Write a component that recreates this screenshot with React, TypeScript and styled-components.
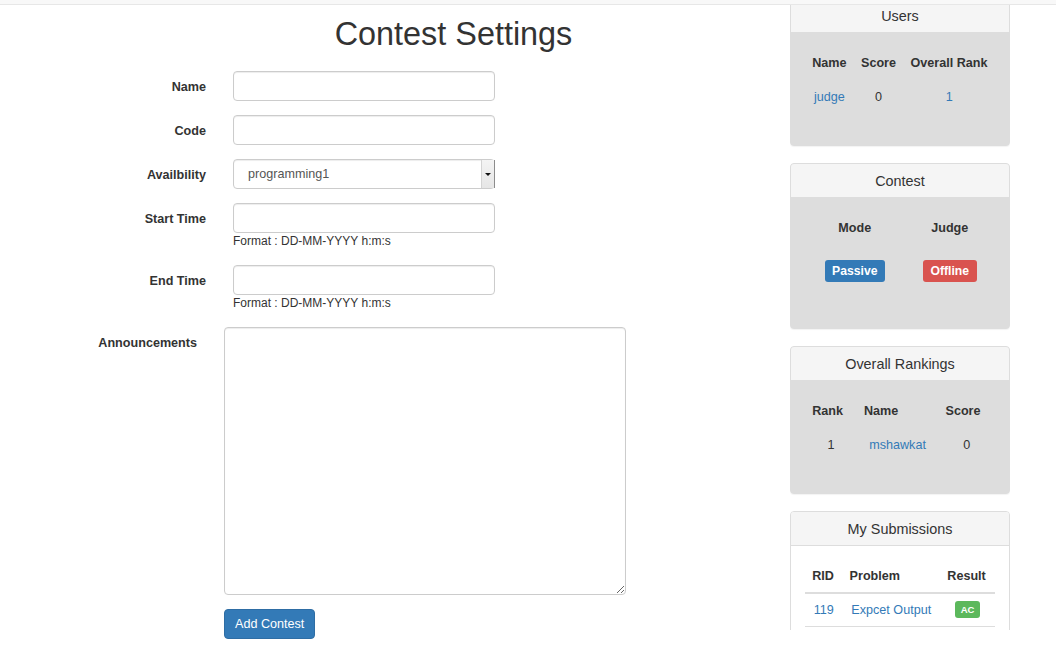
import React from "react";
import styled, { createGlobalStyle } from "styled-components";

const GlobalStyle = createGlobalStyle`
  html, body {
    margin: 0;
    padding: 0;
    background: #fff;
  }
  body {
    font-family: "Liberation Sans", Arial, Helvetica, sans-serif;
    font-size: 12.6px;
    line-height: 18px;
    color: #333;
  }
  * { box-sizing: border-box; }
`;

const TopBar = styled.div`
  position: fixed;
  top: 0;
  left: 0;
  right: 0;
  height: 5px;
  background: #f8f8f8;
  border-bottom: 1px solid #e7e7e7;
  z-index: 10;
`;

const Page = styled.div`
  display: flex;
  align-items: flex-start;
`;

const Main = styled.main`
  width: 790px;
  padding-top: 16px;
`;

const Title = styled.h1`
  margin: 0 0 19px;
  padding-left: 117px;
  text-align: center;
  font-size: 32.4px;
  line-height: 36px;
  font-weight: 400;
  color: #333;
`;

const Form = styled.form`
  display: flex;
  flex-direction: column;
  gap: 14px;
`;

const FieldRow = styled.div<{ $labelCol: number; $fieldWidth: number }>`
  display: grid;
  grid-template-columns: ${(p) => p.$labelCol}px ${(p) => p.$fieldWidth}px;
  align-items: start;
`;

const Label = styled.label`
  text-align: right;
  padding: 6.5px 27px 0 0;
  font-weight: bold;
  line-height: 18px;
  color: #333;
`;

const Field = styled.div`
  display: flex;
  flex-direction: column;
`;

const TextInput = styled.input`
  width: 100%;
  height: 30px;
  padding: 0 11px;
  border: 1px solid #ccc;
  border-radius: 4px;
  box-shadow: inset 0 1px 1px rgba(0, 0, 0, 0.075);
  font: inherit;
  color: #555;
  background: #fff;
`;

const SelectWrap = styled.div`
  position: relative;
  width: 100%;
  height: 30px;
`;

const Select = styled.select`
  appearance: none;
  -webkit-appearance: none;
  width: 100%;
  height: 30px;
  padding: 0 14px;
  border: 1px solid #ccc;
  border-radius: 4px;
  box-shadow: inset 0 1px 1px rgba(0, 0, 0, 0.075);
  font: inherit;
  color: #555;
  background: #fff;
`;

const SelectArrow = styled.span`
  position: absolute;
  top: 1px;
  bottom: 1px;
  right: 0;
  width: 14px;
  display: flex;
  align-items: center;
  justify-content: center;
  background: linear-gradient(#f4f4f4, #e6e6e6);
  border-left: 1px solid #d4d4d4;
  border-right: 1px solid #8c8c8c;
  pointer-events: none;

  &::after {
    content: "";
    border-left: 3px solid transparent;
    border-right: 3px solid transparent;
    border-top: 3px solid #111;
  }
`;

const HelpText = styled.div`
  margin: 0 0 1px;
  font-size: 12px;
  line-height: 17px;
  color: #333;
`;

const TextArea = styled.textarea`
  width: 100%;
  height: 268px;
  padding: 6px 11px;
  border: 1px solid #ccc;
  border-radius: 4px;
  box-shadow: inset 0 1px 1px rgba(0, 0, 0, 0.075);
  font: inherit;
  color: #555;
  resize: both;
`;

const Actions = styled.div`
  padding-left: 224px;
`;

const PrimaryButton = styled.button`
  height: 30px;
  padding: 0 10px;
  border: 1px solid #2e6da4;
  border-radius: 4px;
  background: #337ab7;
  color: #fff;
  font: inherit;
  line-height: 18px;
  cursor: pointer;
`;

const Sidebar = styled.aside`
  width: 220px;
  height: 632px;
  margin-top: -2px;
  overflow: hidden;
  display: flex;
  flex-direction: column;
  gap: 17px;
`;

const Panel = styled.section<{ $muted?: boolean }>`
  flex: none;
  border: 1px solid #ddd;
  border-radius: 4px;
  box-shadow: 0 1px 1px rgba(0, 0, 0, 0.05);
  background: ${(p) => (p.$muted ? "#dddddd" : "#fff")};
  overflow: hidden;
`;

const PanelHeading = styled.div`
  height: 34px;
  line-height: 34px;
  border-bottom: 1px solid #ddd;
  background: #f5f5f5;
  text-align: center;
  font-size: 14.4px;
  color: #333;
`;

const PanelBody = styled.div`
  padding: 14px;
`;

const Table = styled.table<{ $ruled?: boolean }>`
  width: 100%;
  border-collapse: collapse;
  border-spacing: 0;
  margin-bottom: 18px;

  tbody tr:last-child td {
    border-bottom: ${(p) => (p.$ruled ? "1px solid #ddd" : "0")};
  }
`;

const Th = styled.th<{ $align?: "left" | "center" }>`
  padding: 7px 7.2px;
  line-height: 18px;
  font-weight: bold;
  text-align: ${(p) => p.$align ?? "left"};
  border-bottom: 2px solid #ddd;
  white-space: nowrap;
`;

const Td = styled.td<{ $tall?: boolean }>`
  padding: ${(p) => (p.$tall ? "14px 7.2px 13.5px" : "7px 7.2px")};
  line-height: 18px;
  text-align: center;
  border-top: 1px solid #ddd;
  white-space: nowrap;
`;

const Link = styled.a`
  color: #337ab7;
  text-decoration: none;
`;

const Badge = styled.span<{ $tone: "primary" | "danger" | "success"; $small?: boolean }>`
  display: block;
  width: fit-content;
  margin: 0 auto;
  padding: ${(p) => (p.$small ? "3px 5.5px" : "4px 7.5px")};
  border-radius: 3px;
  font-weight: bold;
  font-size: ${(p) => (p.$small ? "9.5px" : "12.2px")};
  line-height: ${(p) => (p.$small ? "11px" : "14px")};
  color: #fff;
  background: ${(p) =>
    p.$tone === "primary" ? "#337ab7" : p.$tone === "danger" ? "#d9534f" : "#5cb85c"};
`;

const users = [{ name: "judge", score: 0, rank: 1 }];
const rankings = [{ rank: 1, name: "mshawkat", score: 0 }];
const submissions = [{ rid: 119, problem: "Expcet Output", result: "AC" }];

export default function App() {
  return (
    <>
      <GlobalStyle />
      <TopBar />
      <Page>
        <Main>
          <Title>Contest Settings</Title>
          <Form onSubmit={(e) => e.preventDefault()}>
            <FieldRow $labelCol={233} $fieldWidth={262}>
              <Label>Name</Label>
              <TextInput type="text" />
            </FieldRow>
            <FieldRow $labelCol={233} $fieldWidth={262}>
              <Label>Code</Label>
              <TextInput type="text" />
            </FieldRow>
            <FieldRow $labelCol={233} $fieldWidth={262}>
              <Label>Availbility</Label>
              <SelectWrap>
                <Select defaultValue="programming1">
                  <option value="programming1">programming1</option>
                </Select>
                <SelectArrow />
              </SelectWrap>
            </FieldRow>
            <FieldRow $labelCol={233} $fieldWidth={262}>
              <Label>Start Time</Label>
              <Field>
                <TextInput type="text" />
                <HelpText>Format : DD-MM-YYYY h:m:s</HelpText>
              </Field>
            </FieldRow>
            <FieldRow $labelCol={233} $fieldWidth={262}>
              <Label>End Time</Label>
              <Field>
                <TextInput type="text" />
                <HelpText>Format : DD-MM-YYYY h:m:s</HelpText>
              </Field>
            </FieldRow>
            <FieldRow $labelCol={224} $fieldWidth={402}>
              <Label>Announcements</Label>
              <TextArea />
            </FieldRow>
            <Actions>
              <PrimaryButton type="submit">Add Contest</PrimaryButton>
            </Actions>
          </Form>
        </Main>

        <Sidebar>
          <Panel $muted>
            <PanelHeading>Users</PanelHeading>
            <PanelBody>
              <Table>
                <thead>
                  <tr>
                    <Th>Name</Th>
                    <Th>Score</Th>
                    <Th>Overall Rank</Th>
                  </tr>
                </thead>
                <tbody>
                  {users.map((u) => (
                    <tr key={u.name}>
                      <Td>
                        <Link href="#">{u.name}</Link>
                      </Td>
                      <Td>{u.score}</Td>
                      <Td>
                        <Link href="#">{u.rank}</Link>
                      </Td>
                    </tr>
                  ))}
                </tbody>
              </Table>
            </PanelBody>
          </Panel>

          <Panel $muted>
            <PanelHeading>Contest</PanelHeading>
            <PanelBody>
              <Table>
                <thead>
                  <tr>
                    <Th $align="center">Mode</Th>
                    <Th $align="center">Judge</Th>
                  </tr>
                </thead>
                <tbody>
                  <tr>
                    <Td $tall>
                      <Badge $tone="primary">Passive</Badge>
                    </Td>
                    <Td $tall>
                      <Badge $tone="danger">Offline</Badge>
                    </Td>
                  </tr>
                </tbody>
              </Table>
            </PanelBody>
          </Panel>

          <Panel $muted>
            <PanelHeading>Overall Rankings</PanelHeading>
            <PanelBody>
              <Table>
                <thead>
                  <tr>
                    <Th>Rank</Th>
                    <Th>Name</Th>
                    <Th>Score</Th>
                  </tr>
                </thead>
                <tbody>
                  {rankings.map((r) => (
                    <tr key={r.name}>
                      <Td>{r.rank}</Td>
                      <Td>
                        <Link href="#">{r.name}</Link>
                      </Td>
                      <Td>{r.score}</Td>
                    </tr>
                  ))}
                </tbody>
              </Table>
            </PanelBody>
          </Panel>

          <Panel>
            <PanelHeading>My Submissions</PanelHeading>
            <PanelBody>
              <Table $ruled>
                <thead>
                  <tr>
                    <Th>RID</Th>
                    <Th>Problem</Th>
                    <Th>Result</Th>
                  </tr>
                </thead>
                <tbody>
                  {submissions.map((s) => (
                    <tr key={s.rid}>
                      <Td>
                        <Link href="#">{s.rid}</Link>
                      </Td>
                      <Td>
                        <Link href="#">{s.problem}</Link>
                      </Td>
                      <Td>
                        <Badge $tone="success" $small>
                          {s.result}
                        </Badge>
                      </Td>
                    </tr>
                  ))}
                </tbody>
              </Table>
            </PanelBody>
          </Panel>
        </Sidebar>
      </Page>
    </>
  );
}
